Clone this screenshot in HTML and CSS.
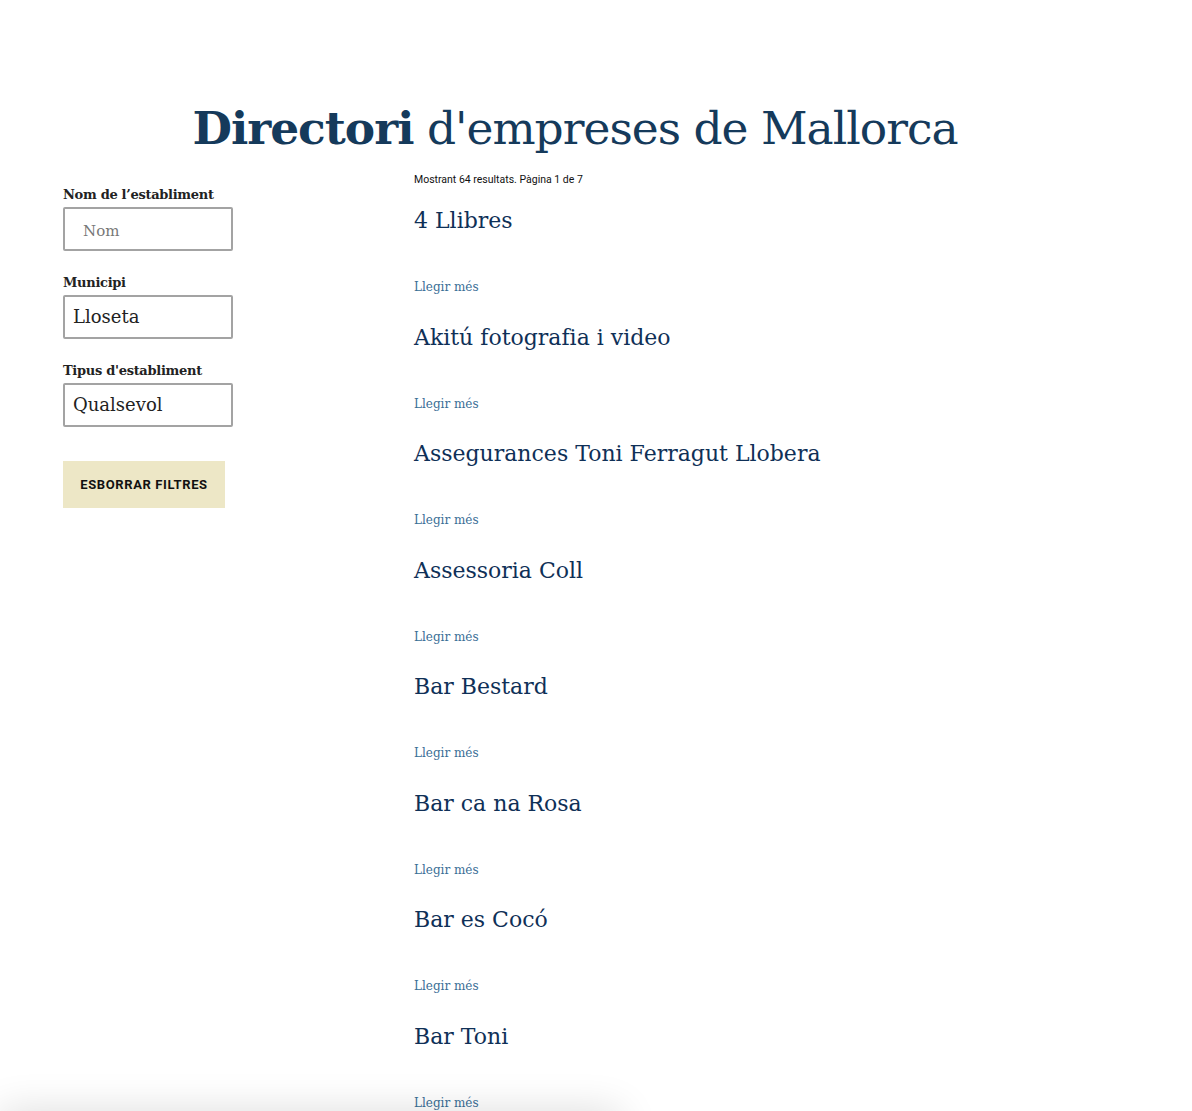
FILE: index.html
```html
<!DOCTYPE html>
<html lang="ca">
<head>
  <meta charset="UTF-8" />
  <meta name="viewport" content="width=device-width, initial-scale=1.0"/>
  <title>Directori d'empreses de Mallorca</title>
  <link rel="stylesheet" href="styles.css">
</head>
<body>
  <div class="page">
    <h1 class="page-title"><strong>Directori</strong> d'empreses de Mallorca</h1>

    <div class="layout">
      <aside class="filters">
        <div class="form-group">
          <label for="nom">Nom de l’establiment</label>
          <input type="text" id="nom" placeholder="Nom" />
        </div>
        <div class="form-group">
          <label for="municipi">Municipi</label>
          <div class="select-box" id="municipi">Lloseta</div>
        </div>
        <div class="form-group">
          <label for="tipus">Tipus d'establiment</label>
          <div class="select-box" id="tipus">Qualsevol</div>
        </div>
        <button class="clear-btn">Esborrar filtres</button>
      </aside>

      <main class="results">
        <p class="results-count">Mostrant 64 resultats. Pàgina 1 de 7</p>
        <div class="result">
          <h2 class="result-title"><a href="#">4 Llibres</a></h2>
          <a class="read-more" href="#">Llegir més</a>
        </div>
        <div class="result">
          <h2 class="result-title"><a href="#">Akitú fotografia i video</a></h2>
          <a class="read-more" href="#">Llegir més</a>
        </div>
        <div class="result">
          <h2 class="result-title"><a href="#">Assegurances Toni Ferragut Llobera</a></h2>
          <a class="read-more" href="#">Llegir més</a>
        </div>
        <div class="result">
          <h2 class="result-title"><a href="#">Assessoria Coll</a></h2>
          <a class="read-more" href="#">Llegir més</a>
        </div>
        <div class="result">
          <h2 class="result-title"><a href="#">Bar Bestard</a></h2>
          <a class="read-more" href="#">Llegir més</a>
        </div>
        <div class="result">
          <h2 class="result-title"><a href="#">Bar ca na Rosa</a></h2>
          <a class="read-more" href="#">Llegir més</a>
        </div>
        <div class="result">
          <h2 class="result-title"><a href="#">Bar es Cocó</a></h2>
          <a class="read-more" href="#">Llegir més</a>
        </div>
        <div class="result">
          <h2 class="result-title"><a href="#">Bar Toni</a></h2>
          <a class="read-more" href="#">Llegir més</a>
        </div>
      </main>
    </div>
  </div>

  <div class="bottom-bar"></div>
</body>
</html>
```

FILE: styles.css
```css
* {
  margin: 0;
  padding: 0;
  box-sizing: border-box;
}

body {
  font-family: "DejaVu Serif", serif;
  color: #222;
  background: #fff;
}

.page {
  padding: 100px 0 0 63px;
}

.page-title {
  width: 1024px;
  text-align: center;
  font-size: 45.5px;
  line-height: 56px;
  font-weight: normal;
  color: #153a5b;
  letter-spacing: -1px;
}

.page-title strong {
  font-weight: bold;
}

.layout {
  display: flex;
  margin-top: 17px;
}

.filters {
  width: 351px;
  flex-shrink: 0;
  padding-top: 13px;
}

.form-group {
  margin-bottom: 24px;
}

label {
  display: block;
  font-size: 13px;
  font-weight: bold;
  color: #222;
  margin-bottom: 5px;
  letter-spacing: -0.3px;
}

input,
.select-box {
  display: block;
  width: 170px;
  height: 44px;
  border: 2px solid #a3a3a3;
  border-radius: 2px;
  font-family: "DejaVu Serif", serif;
  font-size: 18px;
  color: #222;
  background: #fff;
}

input {
  padding: 0 18px;
}

input::placeholder {
  color: #777;
  font-size: 15px;
}

.select-box {
  padding: 0 8px;
  line-height: 40px;
}

.clear-btn {
  margin-top: 10px;
  width: 162px;
  height: 47px;
  border: none;
  background: #ede7c6;
  font-family: Roboto, "Liberation Sans", sans-serif;
  font-size: 13px;
  font-weight: bold;
  letter-spacing: 0.6px;
  text-transform: uppercase;
  color: #111;
  cursor: pointer;
}

.results-count {
  margin-top: -1px;
  font-family: Roboto, "Liberation Sans", sans-serif;
  font-size: 10.5px;
  line-height: 14px;
  color: #111;
}

.result {
  height: 116.5px;
  padding-top: 19px;
}

.result-title {
  font-size: 22px;
  line-height: 30px;
  font-weight: normal;
}

.result-title a {
  color: #0f3057;
  text-decoration: none;
}

.read-more {
  display: block;
  margin-top: 43px;
  font-size: 12px;
  line-height: 16px;
  color: #3a6e96;
  text-decoration: none;
}

.bottom-bar {
  position: fixed;
  left: 0;
  bottom: -40px;
  width: 620px;
  height: 40px;
  box-shadow: 0 0 40px rgba(0, 0, 0, 0.14);
}
```
